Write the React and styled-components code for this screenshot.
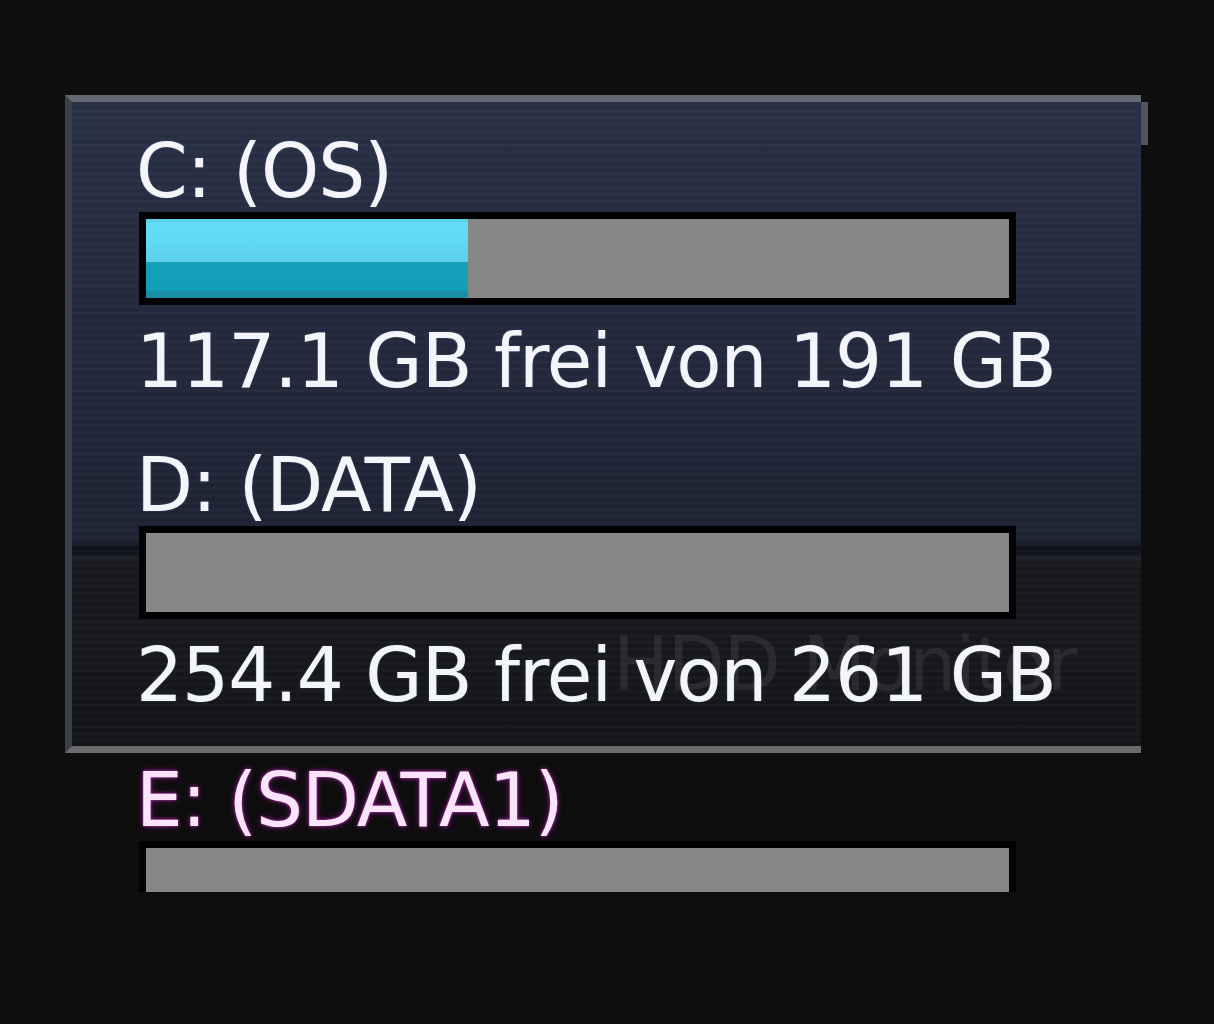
import React from "react";
import styled, { createGlobalStyle } from "styled-components";

const GlobalStyle = createGlobalStyle`
  html, body {
    margin: 0;
    background: #0e0e0e;
  }
  body {
    font-family: "DejaVu Sans", "Liberation Sans", sans-serif;
  }
`;

const drives = [
  { id: "c", label: "C: (OS)", free: 117.1, total: 191, fill: 37.3 },
  { id: "d", label: "D: (DATA)", free: 254.4, total: 261, fill: 0 },
];

const Page = styled.div`
  min-height: 1024px;
  box-sizing: border-box;
  padding: 95px 0 0 65px;
`;

const Panel = styled.section`
  position: relative;
  z-index: 0;
  width: 1076px;
  box-sizing: border-box;
  border-left: 7px solid #3a3f4b;
  border-top: 7px solid #646873;
  border-bottom: 7px solid #6b6b6e;
  padding: 32px 0 34px 67px;
  background:
    repeating-linear-gradient(
      to bottom,
      rgba(255, 255, 255, 0.018) 0 3px,
      transparent 3px 7px
    ),
    linear-gradient(
      to bottom,
      #283045 0,
      #242a3d 200px,
      #1e2333 438px,
      #10131b 446px,
      #10131b 452px,
      #1e2129 454px,
      #18191e 462px,
      #15161a 100%
    );
`;

const EdgeTab = styled.div`
  position: absolute;
  top: 0;
  right: -7px;
  width: 7px;
  height: 43px;
  background: #4f5460;
`;

const Ghost = styled.div`
  position: absolute;
  z-index: -1;
  left: 541px;
  top: 525px;
  font-size: 74px;
  line-height: 74px;
  letter-spacing: -1px;
  color: rgba(90, 84, 84, 0.3);
  white-space: nowrap;
`;

const Drive = styled.div`
  & + & {
    margin-top: 50px;
  }
`;

const Label = styled.div`
  margin-left: -3px;
  font-size: 74px;
  line-height: 74px;
  letter-spacing: -1px;
  white-space: nowrap;
  color: ${(p) => (p.$accent ? "#f9e4f9" : "#f3f5f9")};
  text-shadow: ${(p) =>
    p.$accent
      ? "0 0 3px rgba(200, 60, 200, 0.9), 0 0 7px rgba(110, 15, 110, 0.8)"
      : "0 0 2px rgba(90, 110, 170, 0.6)"};
`;

const Bar = styled.div`
  margin-top: 4px;
  width: 877px;
  height: ${(p) => (p.$clipped ? "51px" : "93px")};
  box-sizing: border-box;
  border: 7px solid #020204;
  border-bottom-width: ${(p) => (p.$clipped ? "0" : "7px")};
  background: #888787;
`;

const Fill = styled.div`
  height: 100%;
  background: linear-gradient(
    to bottom,
    #5dd3ea 0,
    #5dd3ea 3px,
    #66ddf6 4px,
    #62d9f3 22px,
    #5acfe8 43px,
    #14a0b9 43px,
    #119eb6 72px,
    #1a8ea5 72px,
    #1a8ea5 100%
  );
`;

const Info = styled.div`
  margin-top: 19px;
  margin-left: -3px;
  font-size: 74px;
  line-height: 74px;
  letter-spacing: -1px;
  white-space: nowrap;
  color: #f3f5f9;
  text-shadow: 0 0 2px rgba(90, 110, 170, 0.6);
`;

const Outside = styled.div`
  padding: 10px 0 0 74px;
`;

const DriveBlock = ({ drive }) => (
  <Drive>
    <Label>{drive.label}</Label>
    <Bar>
      <Fill style={{ width: `${drive.fill}%` }} />
    </Bar>
    <Info>{`${drive.free} GB frei von ${drive.total} GB`}</Info>
  </Drive>
);

const App = () => (
  <>
    <GlobalStyle />
    <Page>
      <Panel>
        <EdgeTab />
        <Ghost>HDD Monitor</Ghost>
        {drives.map((d) => (
          <DriveBlock key={d.id} drive={d} />
        ))}
      </Panel>
      <Outside>
        <Label $accent>E: (SDATA1)</Label>
        <Bar $clipped />
      </Outside>
    </Page>
  </>
);

export default App;
